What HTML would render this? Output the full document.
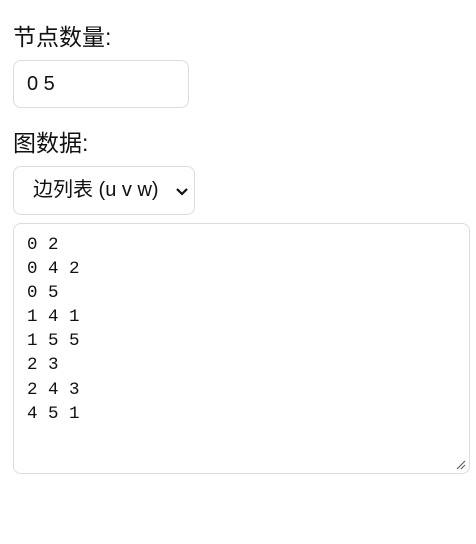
<!DOCTYPE html>
<html><head><meta charset="utf-8"><style>
body{margin:0;background:#fff;font-family:"Liberation Sans","Noto Sans CJK SC",sans-serif;color:#111;}
.lbl{position:absolute;left:13px;font-size:23px;line-height:24px;}
.box{position:absolute;border:1px solid #ddd;border-radius:8px;box-sizing:border-box;background:#fff;}
</style></head><body>
<div class="lbl" style="top:25px">节点数量:</div>
<div class="box" style="left:13px;top:60px;width:176px;height:48px;"><span style="position:absolute;left:13px;top:12px;font-size:20px;line-height:22px;">0 5</span></div>
<div class="lbl" style="top:131px">图数据:</div>
<div class="box" style="left:13px;top:166px;width:182px;height:49px;"><span style="position:absolute;left:19px;top:12px;font-size:20px;line-height:22px;">边列表 (u v w)</span>
<svg style="position:absolute;left:160px;top:19px" width="16" height="11" viewBox="0 0 16 11"><path d="M3 3 L8 8 L13 3" fill="none" stroke="#111" stroke-width="2.2"/></svg></div>
<div class="box" style="left:13px;top:223px;width:457px;height:251px;">
<pre style="margin:0;position:absolute;left:13px;top:9px;font-family:'Liberation Mono','Noto Serif CJK SC',monospace;font-size:17.5px;line-height:24.1px;color:#111;">0 2
0 4 2
0 5
1 4 1
1 5 5
2 3
2 4 3
4 5 1</pre>
<svg style="position:absolute;right:3px;bottom:3px" width="10" height="10"><path d="M1 9 L9 1 M5 9 L9 5" stroke="#555" stroke-width="1"/></svg>
</div>
</body></html>
